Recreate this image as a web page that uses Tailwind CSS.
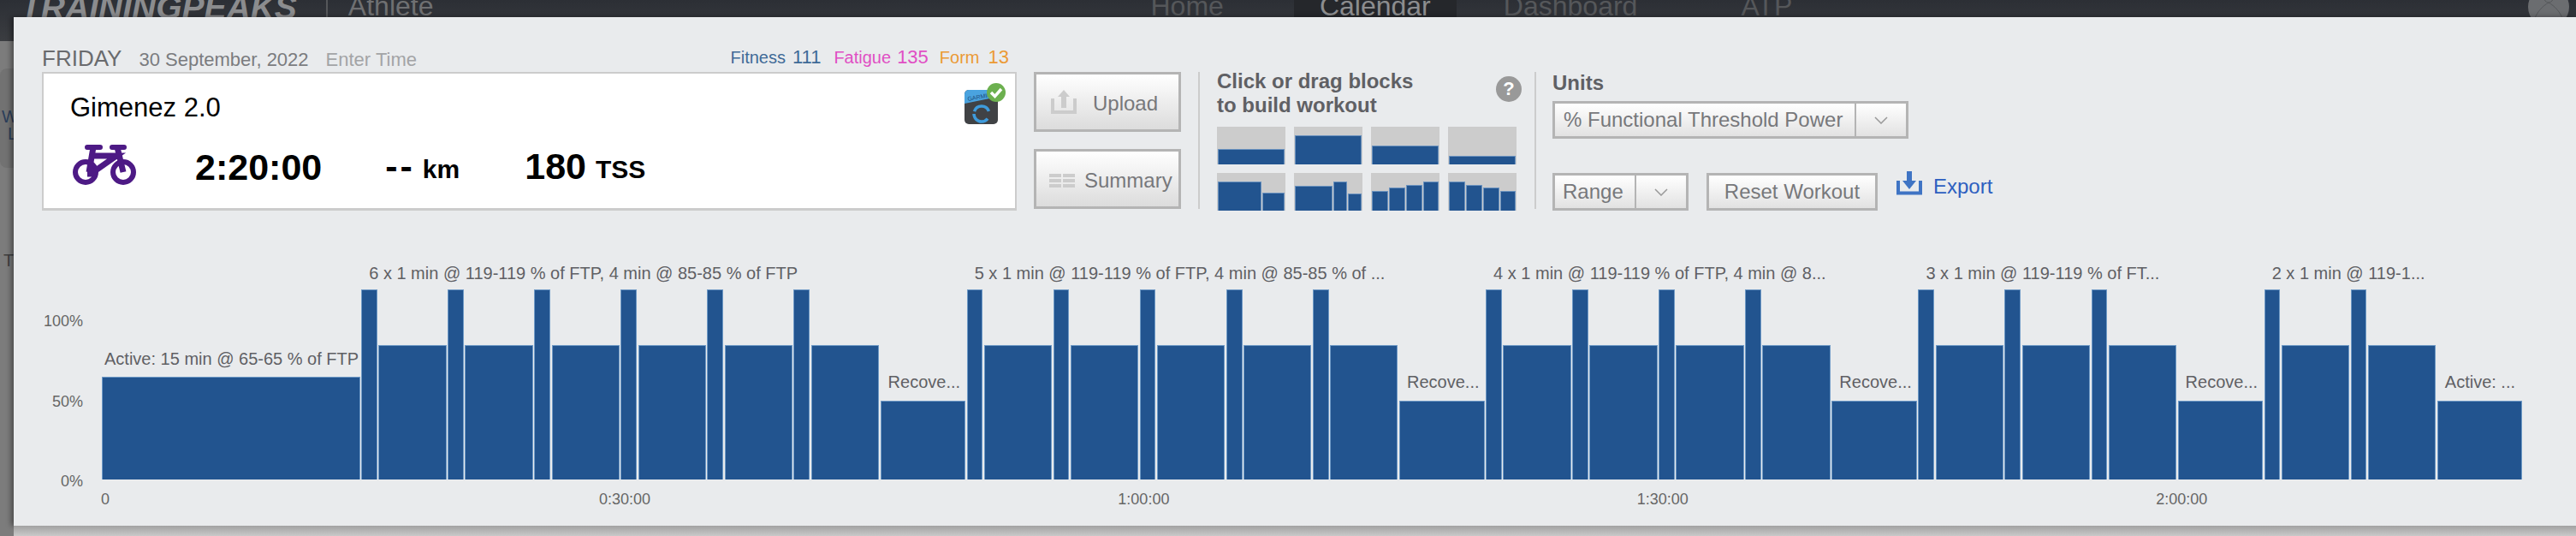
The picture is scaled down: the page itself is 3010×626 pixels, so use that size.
<!DOCTYPE html>
<html lang="en">
<head>
<meta charset="UTF-8" />
<script src="https://cdn.jsdelivr.net/npm/@tailwindcss/browser@4"></script>
<title>Workout Builder</title>
</head>
<body class="w-[3010px] h-[626px] overflow-hidden relative bg-[#7c7c7c] font-['Liberation_Sans',Arial,sans-serif]">

	<!-- page behind the modal -->
	<div class="h-[48px] flex items-start overflow-hidden bg-linear-to-b from-[#2c2f35] to-[#3b3d41] text-[32px] leading-[32px] text-[#55575a]">
		<span class="ml-[24px] -mt-[11px] text-[39px] leading-[40px] font-bold italic text-[#8b8c8e]">TRAININGPEAKS</span>
		<span class="ml-[34px] w-[2px] h-[20px] bg-[#55575a]"></span>
		<span class="ml-[24px] -mt-[9px] text-[#6f7072]">Athlete</span>
		<span class="ml-[838px] -mt-[9px]">Home</span>
		<span class="ml-[82px] w-[190px] h-[20px] bg-[#25272b] text-center text-[#8c8d8f]"><span class="block -mt-[9px]">Calendar</span></span>
		<span class="ml-[55px] -mt-[9px]">Dashboard</span>
		<span class="ml-[121px] -mt-[9px]">ATP</span>
		<span class="ml-auto mr-[8px] -mt-[16px] w-[48px] h-[48px] rounded-full bg-[#6b6d70] flex justify-center">
			<svg width="48" height="48" viewBox="0 0 48 48" fill="none" stroke="#55575a" stroke-width="1"><path d="M17 6c0 8 3 13 7 13s7-5 7-13M7 40c3-10 10-17 17-21 7 4 14 11 17 21" /></svg>
		</span>
	</div>
	<div class="mt-[32px] h-[116px] w-[16px] rounded-l-lg bg-[#727272] text-[20px] leading-[20px] text-[#2c3e5a] pt-[46px] overflow-hidden">
		<div class="pl-[2px]">W</div>
		<div class="pl-[9px]">L</div>
	</div>
	<div class="mt-[98px] w-[16px] overflow-hidden pl-[4px] text-[20px] leading-[20px] text-[#3f3f3f]">T</div>

	<!-- modal -->
	<div class="absolute left-[16px] top-[20px] right-0 bottom-0 flex flex-col">
		<div class="h-[594px] bg-[#e9ebed] shadow-[-3px_0_6px_rgba(0,0,0,0.4)] pl-[33px] pt-[32px]">

			<div class="w-[1139px] h-[32px] flex items-baseline text-[22px] leading-[32px]">
				<span class="text-[26px] text-[#6a6b6e]">FRIDAY</span>
				<span class="ml-[20px] text-[#7b7c7f]">30 September, 2022</span>
				<span class="ml-[20px] text-[#a3a4a6]">Enter Time</span>
				<span class="ml-auto flex items-baseline -translate-y-[3px] text-[20px] mr-[9px]">
					<span class="text-[#3f6a97]">Fitness</span><span class="ml-[8px] text-[22px] text-[#3f6a97]">111</span>
					<span class="ml-[15px] text-[#e04fc4]">Fatigue</span><span class="ml-[7px] text-[22px] text-[#e04fc4]">135</span>
					<span class="ml-[13px] text-[#eb9a35]">Form</span><span class="ml-[10px] text-[22px] text-[#eb9a35]">13</span>
				</span>
			</div>

			<div class="flex items-start">
				<!-- summary card -->
				<div class="relative w-[1139px] h-[162px] bg-white border-2 border-b-[3px] border-[#cccccc] pl-[31px] pt-[22px]">
					<div class="text-[31px] leading-[36px] text-black">Gimenez 2.0</div>
					<div class="mt-[25px] flex items-end text-black font-bold">
						<svg class="ml-[2px] shrink-0" width="76" height="47" viewBox="0 0 76 47" fill="none" stroke="#4d1a85">
							<circle cx="16" cy="32" r="12" stroke-width="6" />
							<circle cx="60" cy="32" r="12" stroke-width="6" />
							<path d="M25 3 L20 32 M25 13 H52 L22 34 H18 M53 3 L60 32" stroke-width="7" />
							<path d="M18 3 H33 M47 3 H61" stroke-width="6" stroke-linecap="round" />
						</svg>
						<span class="ml-[68px] text-[43px] leading-[43px] translate-y-[1px]">2:20:00</span>
						<span class="ml-[74px] text-[43px] leading-[43px] tracking-[3px]">--</span>
						<span class="ml-[9px] text-[30px] leading-[36px]">km</span>
						<span class="ml-[76px] text-[43px] leading-[43px]">180</span>
						<span class="ml-[11px] text-[30px] leading-[36px]">TSS</span>
					</div>
					<svg class="absolute right-[10px] top-[11px]" width="50" height="50" viewBox="0 0 50 50">
						<rect x="1" y="8" width="39" height="40" rx="5" fill="#404245" />
						<path d="M1 24 V13 a5 5 0 0 1 5 -5 H35 a5 5 0 0 1 5 5 V16 Z" fill="#4aa3df" />
						<text x="5" y="21" font-size="7" fill="#1d4f7a" transform="rotate(-10 5 21)">GARMIN</text>
						<circle cx="21" cy="36" r="9" fill="none" stroke="#3e9bdc" stroke-width="3.5" stroke-dasharray="22 3 22 10" stroke-dashoffset="-6" />
						<circle cx="38" cy="11" r="11" fill="#6cb04f" />
						<path d="M32 11 L36.5 15.5 L44 7" fill="none" stroke="#fff" stroke-width="3.5" />
					</svg>
				</div>

				<!-- upload and summary -->
				<div class="ml-[20px] w-[172px] flex flex-col gap-[20px] text-[24px] text-[#77787b]">
					<button class="h-[70px] border-[3px] border-[#b4b4b4] bg-linear-to-b from-white to-[#dcdcdc] flex items-center pl-[17px]">
						<svg width="30" height="28" viewBox="0 0 30 28" fill="#cccccc"><path d="M15 0 L22 8 H18 V21 H12 V8 H8 Z" /><path d="M2 10 V26 H28 V10" fill="none" stroke="#cccccc" stroke-width="4" /></svg>
						<span class="ml-[19px] mt-[3px]">Upload</span>
					</button>
					<button class="h-[70px] border-[3px] border-[#b4b4b4] bg-linear-to-b from-white to-[#dcdcdc] flex items-center pl-[15px]">
						<svg class="mt-[3px]" width="30" height="16" viewBox="0 0 30 16" fill="#cccccc"><path d="M0 0h14v4H0zM16 0h14v4H16zM0 6h14v4H0zM16 6h14v4H16zM0 12h14v4H0zM16 12h14v4H16z" /></svg>
						<span class="ml-[11px] mt-[3px]">Summary</span>
					</button>
				</div>

				<div class="ml-[20px] w-[2px] h-[160px] bg-[#cccccc]"></div>

				<!-- block palette -->
				<div class="ml-[20px] w-[350px]">
					<div class="-mt-[3px] h-[67px] flex items-start justify-between text-[24px] leading-[28px] font-bold text-[#5f6064]">
						<div>Click or drag blocks<br />to build workout</div>
						<div class="mt-[8px] -mr-[6px] w-[30px] h-[30px] rounded-full bg-[#999999] text-white text-center text-[22px] leading-[30px]">?</div>
					</div>
					<div id="blocks" class="grid grid-cols-4 gap-[10px]"></div>
				</div>

				<div class="ml-[21px] w-[2px] h-[160px] bg-[#cccccc]"></div>

				<!-- units -->
				<div class="ml-[19px] text-[24px] text-[#77787b]">
					<div class="-mt-[1px] text-[24px] leading-[28px] font-bold text-[#5f6064]">Units</div>
					<div class="mt-[7px] w-[416px] h-[44px] border-[3px] border-[#b4b4b4] bg-linear-to-b from-white to-[#e2e2e2] flex items-center">
						<span class="flex-1 pl-[10px] whitespace-nowrap">% Functional Threshold Power</span>
						<span class="w-[60px] h-full border-l-2 border-[#b4b4b4] flex items-center justify-center">
							<svg width="16" height="9" viewBox="0 0 16 9" fill="none" stroke="#999999" stroke-width="1.5"><path d="M1 1 L8 8 L15 1" /></svg>
						</span>
					</div>
					<div class="mt-[40px] flex items-start">
						<div class="w-[159px] h-[44px] border-[3px] border-[#b4b4b4] bg-linear-to-b from-white to-[#e2e2e2] flex items-center">
							<span class="flex-1 pl-[9px]">Range</span>
							<span class="w-[60px] h-full border-l-2 border-[#b4b4b4] flex items-center justify-center">
								<svg width="16" height="9" viewBox="0 0 16 9" fill="none" stroke="#999999" stroke-width="1.5"><path d="M1 1 L8 8 L15 1" /></svg>
							</span>
						</div>
						<button class="ml-[21px] w-[200px] h-[44px] border-[3px] border-[#b4b4b4] bg-linear-to-b from-white to-[#e2e2e2] text-center">Reset Workout</button>
						<svg class="ml-[22px] -mt-[2px]" width="30" height="28" viewBox="0 0 30 28" fill="#3f74c4"><path d="M12 0 h6 V11 h5 L15 21 L7 11 h5 Z" /><path d="M2 11 V25.5 H28 V11" fill="none" stroke="#3f74c4" stroke-width="4" /></svg>
						<span class="ml-[13px] leading-[32px] text-[#2d5fc0]">Export</span>
					</div>
				</div>
			</div>

			<!-- workout chart -->
			<div class="mt-[60px] flex items-end h-[254px]">
				<div class="w-[48px] h-[207px] -mb-[12px] flex flex-col justify-between items-end text-[18px] leading-[20px] text-[#666666]">
					<span>100%</span><span>50%</span><span>0%</span>
				</div>
				<div id="chart" class="ml-[22px] flex items-end"></div>
			</div>
			<div class="mt-[13px] ml-[69px] flex gap-[506.4px] text-[18px] leading-[20px] text-[#666666]">
				<span class="w-[55.6px]">0</span>
				<span class="w-[100px] text-center">0:30:00</span>
				<span class="w-[100px] text-center">1:00:00</span>
				<span class="w-[100px] text-center">1:30:00</span>
				<span class="w-[100px] text-center">2:00:00</span>
			</div>
		</div>
		<div class="flex-1 bg-linear-to-b from-[#a2a2a2] to-[#c9c9c9]"></div>
	</div>

	<script>
		const PX_PER_MIN = 20.214;
		// bar heights in px for each intensity
		const HEIGHT = { 119: 222, 85: 157, 65: 120, 50: 92 };

		function repeats(n, label) {
			const steps = [];
			for (let i = 0; i < n; i++) {
				steps.push([1, 119], [4, 85]);
			}
			return { label: label, pad: "pl-[9px] pb-[7px]", steps: steps };
		}
		function single(label, min, pct, pad) {
			return { label: label, pad: pad, steps: [[min, pct]] };
		}

		const recovery = "pl-[9px] pb-[10px]";
		const workout = [
			single("Active: 15 min @ 65-65 % of FTP", 15, 65, "pl-[3px] pb-[9px]"),
			repeats(6, "6 x 1 min @ 119-119 % of FTP, 4 min @ 85-85 % of FTP"),
			single("Recove...", 5, 50, recovery),
			repeats(5, "5 x 1 min @ 119-119 % of FTP, 4 min @ 85-85 % of ..."),
			single("Recove...", 5, 50, recovery),
			repeats(4, "4 x 1 min @ 119-119 % of FTP, 4 min @ 8..."),
			single("Recove...", 5, 50, recovery),
			repeats(3, "3 x 1 min @ 119-119 % of FT..."),
			single("Recove...", 5, 50, recovery),
			repeats(2, "2 x 1 min @ 119-1..."),
			single("Active: ...", 5, 50, recovery),
		];

		document.getElementById("chart").innerHTML = workout.map((g) => {
			const mins = g.steps.reduce((sum, s) => sum + s[0], 0);
			const bars = g.steps.map((s) =>
				`<div class="shrink-0 pr-[1.5px]" style="width:${s[0] * PX_PER_MIN}px;height:${HEIGHT[s[1]]}px">` +
				`<div class="h-full bg-[#22548f] border border-b-0 border-[#6f9ac6]"></div></div>`
			).join("");
			return `<div class="shrink-0" style="width:${mins * PX_PER_MIN}px">` +
				`<div class="whitespace-nowrap text-[20px] leading-[24px] text-[#5f6064] ${g.pad}">${g.label}</div>` +
				`<div class="flex items-end">${bars}</div></div>`;
		}).join("");

		// palette blocks: bars as [width weight, height]
		const blocks = [
			[[78, 18]], [[78, 34]], [[78, 22]], [[78, 10]],
			[[52, 34], [25, 21]], [[46, 29], [15, 34], [15, 20]],
			[[19, 23], [19, 27], [19, 30], [18, 34]], [[19, 34], [19, 30], [19, 27], [18, 23]],
		];
		document.getElementById("blocks").innerHTML = blocks.map((b) => {
			const bars = b.map((s) =>
				`<div class="bg-[#22548f] border border-b-0 border-[#6c93bf]" style="flex-grow:${s[0]};flex-basis:0;height:${s[1]}px"></div>`
			).join("");
			return `<div class="h-[44px] bg-[#cccccc] flex items-end gap-[1px] px-[1px]">${bars}</div>`;
		}).join("");
	</script>
</body>
</html>
